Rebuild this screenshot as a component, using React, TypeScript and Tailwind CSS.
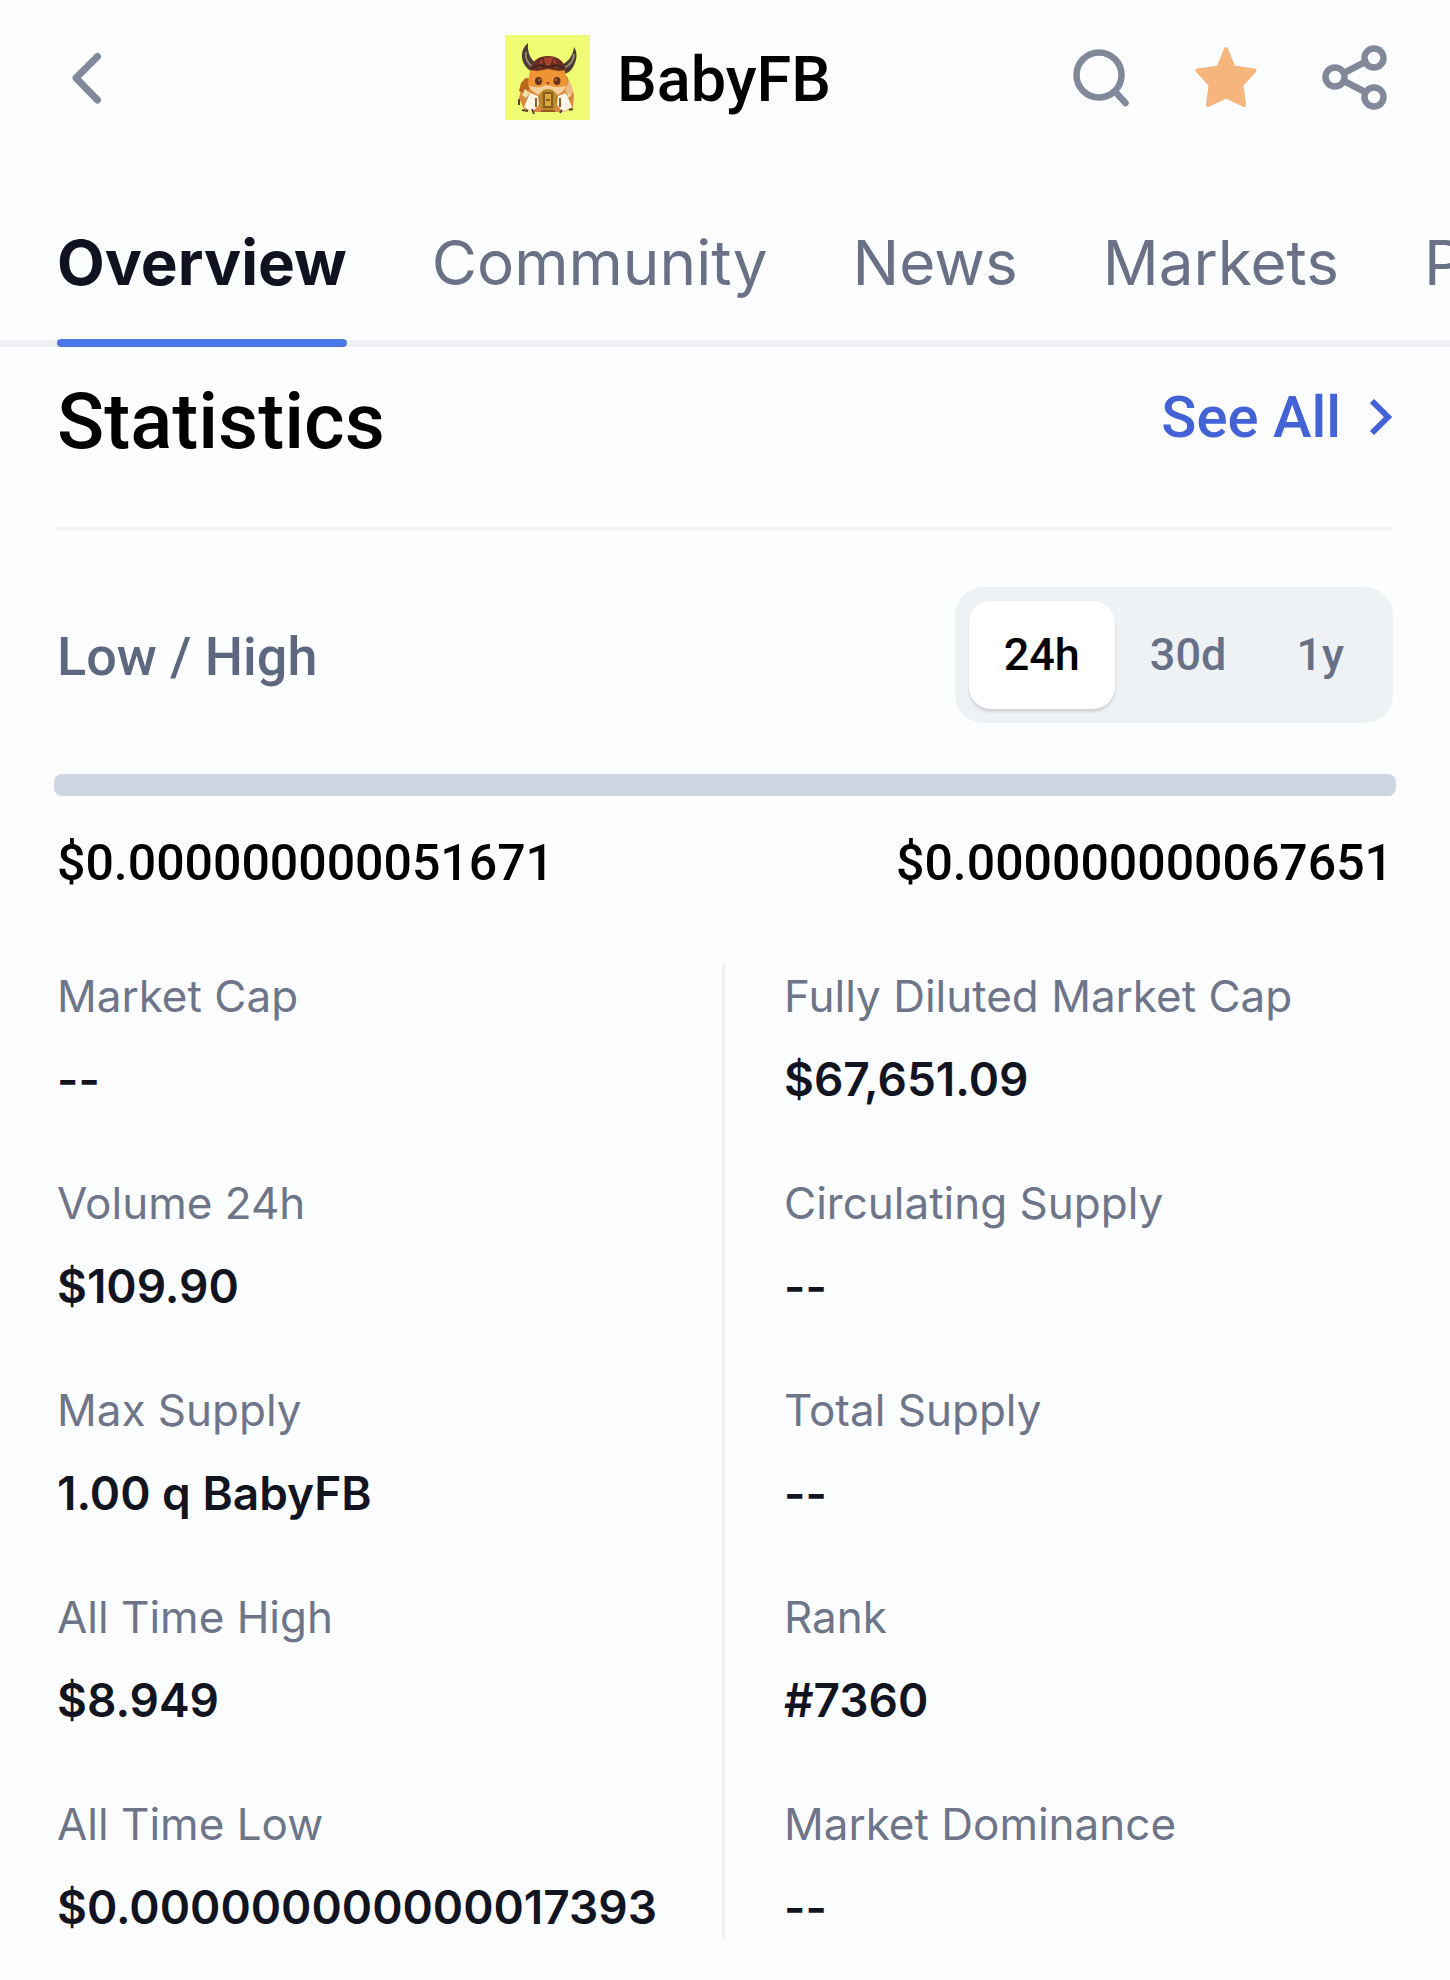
import { useState } from "react";

const tabs = ["Overview", "Community", "News", "Markets", "Portfolio"];

const ranges = ["24h", "30d", "1y"];

const leftStats = [
  { label: "Market Cap", value: "--" },
  { label: "Volume 24h", value: "$109.90" },
  { label: "Max Supply", value: "1.00 q BabyFB" },
  { label: "All Time High", value: "$8.949" },
  { label: "All Time Low", value: "$0.000000000000017393" },
];

const rightStats = [
  { label: "Fully Diluted Market Cap", value: "$67,651.09" },
  { label: "Circulating Supply", value: "--" },
  { label: "Total Supply", value: "--" },
  { label: "Rank", value: "#7360" },
  { label: "Market Dominance", value: "--" },
];

function BackIcon() {
  return (
    <svg width="60" height="60" viewBox="0 0 60 60" fill="none" stroke="#81889a" strokeWidth="7" strokeLinecap="round" strokeLinejoin="round">
      <path d="M40.500 9.500 19 31l21.500 22" />
    </svg>
  );
}

function SearchIcon() {
  return (
    <svg width="64" height="64" viewBox="0 0 64 64" fill="none" stroke="#81889a" strokeWidth="6.500" strokeLinecap="round">
      <circle cx="30" cy="30" r="22.500" />
      <path d="m46.500 47 10 11" />
    </svg>
  );
}

function StarIcon() {
  return (
    <svg width="64" height="64" viewBox="0 0 64 64" fill="#f5b57c" stroke="#f5b57c" strokeWidth="4" strokeLinejoin="round">
      <path d="M31 4 38.500 22.500 59.500 25.500 46.500 40 49 60 31 51.500 13 60 15.500 40 2.500 25.500 23.500 22.500Z" />
    </svg>
  );
}

function ShareIcon() {
  return (
    <svg width="66" height="66" viewBox="0 0 66 66" fill="none" stroke="#81889a" strokeWidth="6.500">
      <circle cx="14" cy="33" r="9.500" />
      <circle cx="53" cy="14" r="9.500" />
      <circle cx="53" cy="53" r="9.500" />
      <path d="m23 29 21-11M23 37l21 11" />
    </svg>
  );
}

function CoinLogo() {
  return (
    <svg width="85" height="85" viewBox="0 0 85 85" role="img" aria-label="BabyFB logo">
      <rect width="85" height="85" fill="#effc73" />
      {/* horns */}
      <path d="M23 8c-6 5-8 13-4 21 2 4 6 7 10 8l5-7c-7-3-12-11-11-22Z" fill="#4b3b33" />
      <path d="M69 12c4 6 3 13-1 20-2 4-6 7-10 7l-4-8c8-3 14-9 15-19Z" fill="#4b3b33" />
      <path d="M21 17c-1 6 2 12 8 16M69 19c0 6-4 11-10 14" fill="none" stroke="#8d8577" strokeWidth="2" />
      {/* body */}
      <path d="M20 43c-4 4-5 8-4 12l-2 8 5 11 10 3h30l9-5 1-12-3-9-4-10Z" fill="#d98a3e" />
      <path d="M16 48l6-5 4 8-5 8-7-3Z" fill="#b8681f" />
      <path d="M20 54l5 4-4 5-4-3ZM62 53l5 6-4 4Z" fill="#f3dfa6" />
      <path d="M64 45l4 9-2 7-6-5Z" fill="#ecbd88" />
      {/* head */}
      <path d="M25 36c6-6 29-6 35 0l2 12c0 8-8 13-19 13s-20-5-20-13Z" fill="#ee9434" />
      <path d="M24 51c4 0 7 2 11 1l7-2 8 2c4 1 7-1 11-1-1 6-8 10-18 10s-17-4-19-10Z" fill="#f5cf9c" />
      {/* helmet */}
      <path d="M25 35c2-9 8-14 18-14s16 5 18 14l-7 1-11-2-11 2Z" fill="#6b2f22" />
      <path d="m34 33 3-8M43 32l-3-8 7-1ZM52 33l-3-8" fill="#a9442f" stroke="#a9442f" strokeWidth="2" />
      <path d="M27 33l8-3 8 2 8-2 8 3" fill="none" stroke="#3d241c" strokeWidth="2" />
      {/* face */}
      <ellipse cx="33.500" cy="46" rx="3.500" ry="4" fill="#67331b" />
      <ellipse cx="52" cy="46" rx="3.500" ry="4" fill="#67331b" />
      <circle cx="34.500" cy="45" r="1" fill="#c98a4b" />
      <circle cx="51" cy="45" r="1" fill="#c98a4b" />
      <path d="M41 47h4l-2 3Z" fill="#a03d24" />
      {/* coin and paws */}
      <ellipse cx="43" cy="65" rx="10" ry="11" fill="#b8892b" />
      <path d="M39 58h8v14h-8Z" fill="#d9a93b" stroke="#8a5a1e" strokeWidth="2" />
      <path d="M41 65h4" stroke="#8a5a1e" strokeWidth="2" />
      <path d="m25 58 8 3 1 9-7 7-8-5Z" fill="#fff6e8" />
      <path d="m61 58-8 3-1 9 6 7 9-5Z" fill="#fff6e8" />
      <path d="M14 64v6M17 75l6 1M27 74l2 5M57 75l-2 3M64 75l4-1" stroke="#5a4328" strokeWidth="2" />
      <path d="M31 63v9M55 63v9M36 76h14" stroke="#9a5a26" strokeWidth="2" />
    </svg>
  );
}

function StatList({ items }: { items: { label: string; value: string }[] }) {
  return (
    <dl className="flex flex-col gap-[60px]">
      {items.map((item) => (
        <div key={item.label}>
          <dt className="text-[44px] leading-[64px] text-[#6e7588]">{item.label}</dt>
          <dd className="mt-[19px] text-[46px] leading-[64px] font-semibold text-[#12151f]">{item.value}</dd>
        </div>
      ))}
    </dl>
  );
}

export default function App() {
  const [activeTab, setActiveTab] = useState("Overview");
  const [range, setRange] = useState("24h");

  return (
    <div className="min-h-screen overflow-x-hidden bg-[#fcfdff] pb-9 font-[Inter,sans-serif] [font-optical-sizing:none]">
      {/* HEADER */}
      <header className="flex items-center pt-[34px] pr-[63px] pl-[57px] font-[Roboto,sans-serif]">
        <div className="flex w-[210px]">
          <button aria-label="Back">
            <BackIcon />
          </button>
        </div>
        <div className="flex flex-1 items-center justify-center gap-[27px]">
          <CoinLogo />
          <h1 className="pt-[6px] text-[63px] leading-[80px] font-medium text-black">BabyFB</h1>
        </div>
        <div className="flex items-center gap-[62px]">
          <button aria-label="Search">
            <SearchIcon />
          </button>
          <button aria-label="Remove from watchlist">
            <StarIcon />
          </button>
          <button aria-label="Share">
            <ShareIcon />
          </button>
        </div>
      </header>

      {/* TABS */}
      <nav className="mt-[101px] flex gap-[85px] overflow-hidden px-[57px] shadow-[inset_0_-7px_0_#eff1f4]">
        {tabs.map((tab) => (
          <button
            key={tab}
            onClick={() => setActiveTab(tab)}
            className={`relative shrink-0 pb-[42px] text-[62px] leading-[84px] ${
              activeTab === tab ? "font-bold text-[#10131f]" : "text-[#6a7186]"
            }`}
          >
            {tab}
            {activeTab === tab && (
              <span className="absolute inset-x-0 bottom-0 h-2 rounded-full bg-[#4c78e6]" />
            )}
          </button>
        ))}
      </nav>

      {/* STATISTICS */}
      <main className="px-[57px]">
        <div className="flex items-start justify-between border-b-4 border-[#f2f4f6] pt-[25px] pb-[55px] font-[Roboto,sans-serif]">
          <h2 className="text-[78px] leading-[100px] font-medium text-black">Statistics</h2>
          <a href="#statistics" className="flex items-center gap-7 text-[58px] leading-[90px] font-medium text-[#4262d6]">
            See All
            <svg width="24" height="38" viewBox="0 0 24 38" fill="none" stroke="currentColor" strokeWidth="6">
              <path d="m3 3 16 16L3 35" />
            </svg>
          </a>
        </div>

        <div className="mt-[56px] flex items-center justify-between font-[Roboto,sans-serif]">
          <h3 className="pt-1 text-[54px] leading-[72px] font-medium text-[#5d677d]">Low / High</h3>
          <div className="flex rounded-[28px] bg-[#eff2f5] p-[14px]">
            {ranges.map((r) => (
              <button
                key={r}
                onClick={() => setRange(r)}
                className={`rounded-[22px] px-[35px] py-[20px] text-[45px] leading-[68px] font-medium ${
                  range === r ? "bg-white text-black shadow-[0_3px_3px_#cfd3d8]" : "text-[#677085]"
                }`}
              >
                {r}
              </button>
            ))}
          </div>
        </div>

        <div className="-mx-[3px] mt-[51px] h-[22px] rounded-lg bg-[#ced6e2]" />

        <div className="mt-[35px] flex justify-between font-[Roboto,sans-serif] text-[50px] leading-[64px] font-medium text-black">
          <span>$0.000000000051671</span>
          <span>$0.000000000067651</span>
        </div>

        <div className="mt-[69px] grid grid-cols-2">
          <div className="border-r-3 border-[#eff1f4]">
            <StatList items={leftStats} />
          </div>
          <div className="pl-[59px]">
            <StatList items={rightStats} />
          </div>
        </div>
      </main>
    </div>
  );
}
